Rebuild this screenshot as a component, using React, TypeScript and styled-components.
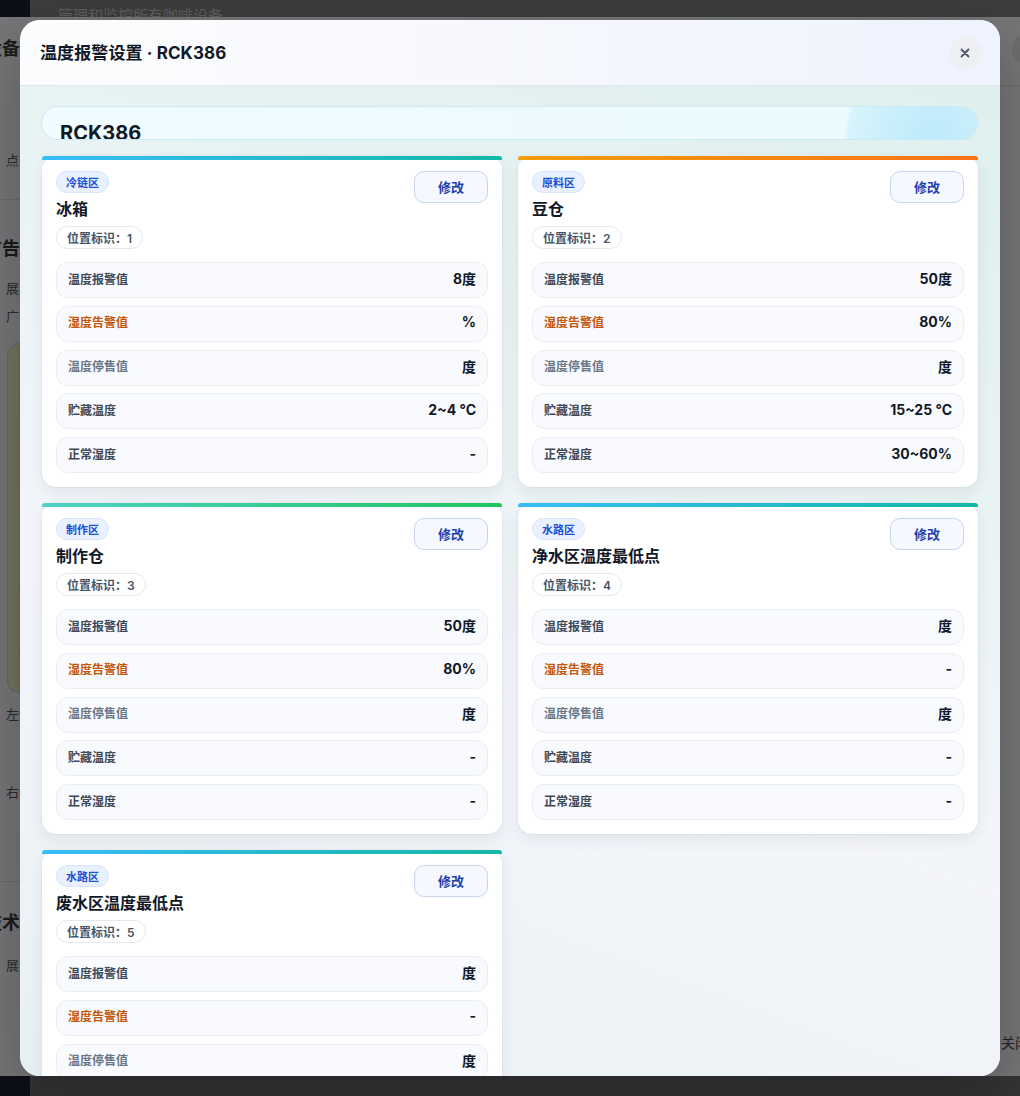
import React from "react";
import styled, { createGlobalStyle } from "styled-components";

const GlobalStyle = createGlobalStyle`
  html, body { margin: 0; padding: 0; height: 100%; }
  body {
    font-family: Inter, "Noto Sans CJK SC", "Noto Sans", sans-serif;
    overflow: hidden;
    background: #363636;
  }
  * { box-sizing: border-box; }
`;

/* ---------- dimmed page behind the modal ---------- */
const Backdrop = styled.div`
  position: fixed;
  inset: 0;
  display: flex;
  flex-direction: column;
`;
const Strip = styled.div<{ $h: number; $bg: string }>`
  height: ${(p) => p.$h}px;
  display: flex;
  background: ${(p) => p.$bg};
  overflow: hidden;
`;
const NavyBlock = styled.div`
  width: 30px;
  background: #0c0f17;
`;
const TopSubtitle = styled.div`
  margin: 6px 0 0 28px;
  font-size: 15px;
  line-height: 20px;
  color: #5e5e5e;
`;
const Drawer = styled.div`
  flex: 1;
  background: #767678;
  display: flex;
  justify-content: space-between;
  overflow: hidden;
`;
const DrawerLeft = styled.div`
  width: 20px;
  display: flex;
  flex-direction: column;
  overflow: hidden;
  color: #1b1b1b;
`;
const DrawerHeading = styled.div<{ $mt: number }>`
  margin-top: ${(p) => p.$mt}px;
  margin-left: -16px;
  font-size: 18px;
  font-weight: 700;
  line-height: 24px;
  white-space: nowrap;
`;
const DrawerText = styled.div<{ $mt: number; $ml?: number }>`
  margin-top: ${(p) => p.$mt}px;
  margin-left: ${(p) => p.$ml ?? 6}px;
  font-size: 13px;
  line-height: 18px;
  color: #2a2a2a;
  white-space: nowrap;
`;
const DrawerLine = styled.div<{ $mt: number }>`
  margin-top: ${(p) => p.$mt}px;
  height: 1px;
  background: #6a6a6c;
`;
const DrawerImage = styled.div`
  margin: 18px 0 0 7px;
  height: 350px;
  border-radius: 14px 0 0 14px;
  background: #75735f;
  border: 1px solid #666;
`;
const DrawerRight = styled.div`
  width: 20px;
  display: flex;
  flex-direction: column;
  overflow: hidden;
`;
const GhostCircle = styled.div`
  margin: 16px 0 0 12px;
  width: 32px;
  height: 32px;
  border-radius: 50%;
  background: #6d6d70;
`;
const CloseGhost = styled.div`
  margin-top: auto;
  margin-bottom: 24px;
  margin-left: 1px;
  font-size: 14px;
  color: #222;
  white-space: nowrap;
`;

/* ---------- modal ---------- */
const Modal = styled.div`
  position: fixed;
  top: 20px;
  left: 20px;
  width: 980px;
  height: 1056px;
  border-radius: 20px;
  overflow: hidden;
  display: flex;
  flex-direction: column;
  background: #f3f6fa;
  box-shadow: 0 20px 60px rgba(0, 0, 0, 0.25);
`;
const Header = styled.div`
  height: 66px;
  flex: none;
  display: flex;
  align-items: center;
  justify-content: space-between;
  padding: 0 19px 0 20px;
  background: linear-gradient(90deg, #fcfdfe 0%, #f6f8fd 50%, #eef3fe 100%);
  border-bottom: 1px solid #e1e6ee;
`;
const Title = styled.h2`
  margin: 0 0 2px;
  font-size: 17px;
  font-weight: 700;
  color: #111827;
  letter-spacing: 0.1px;
`;
const CloseButton = styled.button`
  width: 32px;
  height: 32px;
  border: none;
  border-radius: 50%;
  background: #eeeff2;
  display: flex;
  align-items: center;
  justify-content: center;
  padding: 0;
  cursor: pointer;
`;
const Body = styled.div`
  flex: 1;
  overflow: hidden;
  padding: 20px 22px 20px 22px;
  display: flex;
  flex-direction: column;
  gap: 16px;
  background: linear-gradient(200deg, #def0ee 0%, #e9f3f4 30%, #f3f5fa 60%, #eef3f7 85%, #e6f0f3 100%);
`;
const NameBar = styled.div`
  height: 34px;
  flex: none;
  margin-left: -1px;
  border-radius: 17px;
  border: 1px solid #c9eaf6;
  background: radial-gradient(circle 112px at 95.4% 100%, #bdeafa 0%, #c9eefb 40%, #d9f4fd 77%, rgba(236, 251, 255, 0) 80%),
    linear-gradient(90deg, #f0fcff 0%, #eafaff 100%);
  padding: 15px 0 0 18px;
  overflow: hidden;
  font-size: 20px;
  line-height: 22px;
  font-weight: 700;
  color: #111827;
`;
const Grid = styled.div`
  display: grid;
  grid-template-columns: 1fr 1fr;
  gap: 16px;
  align-items: start;
`;

const accents = {
  blue: "linear-gradient(90deg, #38bdf8 0%, #14b8a6 100%)",
  orange: "linear-gradient(90deg, #f59e0b 0%, #f97316 100%)",
  green: "linear-gradient(90deg, #4fd1c5 0%, #22c55e 100%)",
};
type Accent = keyof typeof accents;

const Card = styled.div`
  background: #ffffff;
  border-radius: 14px;
  box-shadow: 0 6px 16px rgba(15, 23, 42, 0.07), 0 0 0 1px rgba(226, 232, 240, 0.6);
  display: flex;
  flex-direction: column;
  padding-bottom: 14px;
`;
const AccentBar = styled.div<{ $accent: Accent }>`
  height: 4px;
  border-radius: 3px 3px 0 0;
  background: ${(p) => accents[p.$accent]};
`;
const CardTop = styled.div`
  display: flex;
  justify-content: space-between;
  align-items: flex-start;
  padding: 11px 14px 0;
`;
const CardInfo = styled.div`
  display: flex;
  flex-direction: column;
  align-items: flex-start;
`;
const ZoneTag = styled.span`
  height: 22px;
  display: inline-flex;
  align-items: center;
  padding: 0 9px 1px;
  border-radius: 11px;
  background: #eaf1fe;
  border: 1px solid #d7e4fb;
  color: #1d4ed8;
  font-size: 11px;
  font-weight: 600;
`;
const CardName = styled.div`
  margin-top: 4px;
  font-size: 16px;
  line-height: 24px;
  font-weight: 700;
  color: #111827;
`;
const PosPill = styled.span`
  margin-top: 5px;
  height: 23px;
  display: inline-flex;
  align-items: center;
  padding: 0 10px 1px;
  border-radius: 12px;
  background: #ffffff;
  border: 1px solid #e3e8f0;
  color: #475569;
  font-size: 12px;
  font-weight: 600;
`;
const EditButton = styled.button`
  width: 74px;
  height: 32px;
  border-radius: 10px;
  border: 1px solid #c9d5ea;
  background: #f5f8ff;
  color: #1e3fae;
  font-family: inherit;
  font-size: 13px;
  font-weight: 700;
  cursor: pointer;
  padding: 0 0 2px;
`;
const Rows = styled.div`
  margin-top: 13px;
  padding: 0 14px;
  display: flex;
  flex-direction: column;
  gap: 7.75px;
`;
const tones = {
  normal: "#3d4859",
  warn: "#c2570c",
  muted: "#687689",
};
type Tone = keyof typeof tones;
const Row = styled.div`
  height: 36px;
  display: flex;
  align-items: center;
  justify-content: space-between;
  padding: 0 11px 4px 11px;
  border-radius: 12px;
  background: #f9fafe;
  border: 1px solid #e9edf5;
`;
const RowLabel = styled.span<{ $tone: Tone }>`
  font-size: 12px;
  font-weight: 600;
  color: ${(p) => tones[p.$tone]};
`;
const RowValue = styled.span`
  font-size: 14px;
  font-weight: 700;
  color: #111827;
`;

const labels: { text: string; tone: Tone }[] = [
  { text: "温度报警值", tone: "normal" },
  { text: "湿度告警值", tone: "warn" },
  { text: "温度停售值", tone: "muted" },
  { text: "贮藏温度", tone: "normal" },
  { text: "正常湿度", tone: "normal" },
];

const cards: { zone: string; name: string; pos: number; accent: Accent; values: string[] }[] = [
  { zone: "冷链区", name: "冰箱", pos: 1, accent: "blue", values: ["8度", "%", "度", "2~4 °C", "-"] },
  { zone: "原料区", name: "豆仓", pos: 2, accent: "orange", values: ["50度", "80%", "度", "15~25 °C", "30~60%"] },
  { zone: "制作区", name: "制作仓", pos: 3, accent: "green", values: ["50度", "80%", "度", "-", "-"] },
  { zone: "水路区", name: "净水区温度最低点", pos: 4, accent: "blue", values: ["度", "-", "度", "-", "-"] },
  { zone: "水路区", name: "废水区温度最低点", pos: 5, accent: "blue", values: ["度", "-", "度", "-", "-"] },
];

export default function App() {
  return (
    <>
      <GlobalStyle />
      <Backdrop>
        <Strip $h={17} $bg="#3d3d3d">
          <NavyBlock />
          <TopSubtitle>管理和监控所有咖啡设备</TopSubtitle>
        </Strip>
        <Drawer>
          <DrawerLeft>
            <DrawerHeading $mt={20}>设备详情</DrawerHeading>
            <DrawerText $mt={90} $ml={6}>点击</DrawerText>
            <DrawerLine $mt={30} />
            <DrawerHeading $mt={37}>广告</DrawerHeading>
            <DrawerText $mt={18}>展示</DrawerText>
            <DrawerText $mt={10}>广告</DrawerText>
            <DrawerImage />
            <DrawerText $mt={12}>左侧</DrawerText>
            <DrawerText $mt={60}>右侧</DrawerText>
            <DrawerLine $mt={80} />
            <DrawerHeading $mt={29}>技术</DrawerHeading>
            <DrawerText $mt={21}>展示</DrawerText>
          </DrawerLeft>
          <DrawerRight>
            <GhostCircle />
            <DrawerLine $mt={20} />
            <CloseGhost>关闭</CloseGhost>
          </DrawerRight>
        </Drawer>
        <Strip $h={20} $bg="#343436">
          <NavyBlock />
        </Strip>
      </Backdrop>

      <Modal>
        <Header>
          <Title>温度报警设置 · RCK386</Title>
          <CloseButton aria-label="关闭">
            <svg width="10" height="10" viewBox="0 0 10 10">
              <path d="M1.5 1.5 L8.5 8.5 M8.5 1.5 L1.5 8.5" stroke="#4b5567" strokeWidth="1.8" strokeLinecap="round" />
            </svg>
          </CloseButton>
        </Header>
        <Body>
          <NameBar>RCK386</NameBar>
          <Grid>
            {cards.map((c) => (
              <Card key={c.pos}>
                <AccentBar $accent={c.accent} />
                <CardTop>
                  <CardInfo>
                    <ZoneTag>{c.zone}</ZoneTag>
                    <CardName>{c.name}</CardName>
                    <PosPill>位置标识：{c.pos}</PosPill>
                  </CardInfo>
                  <EditButton>修改</EditButton>
                </CardTop>
                <Rows>
                  {labels.map((l, i) => (
                    <Row key={l.text}>
                      <RowLabel $tone={l.tone}>{l.text}</RowLabel>
                      <RowValue>{c.values[i]}</RowValue>
                    </Row>
                  ))}
                </Rows>
              </Card>
            ))}
          </Grid>
        </Body>
      </Modal>
    </>
  );
}
